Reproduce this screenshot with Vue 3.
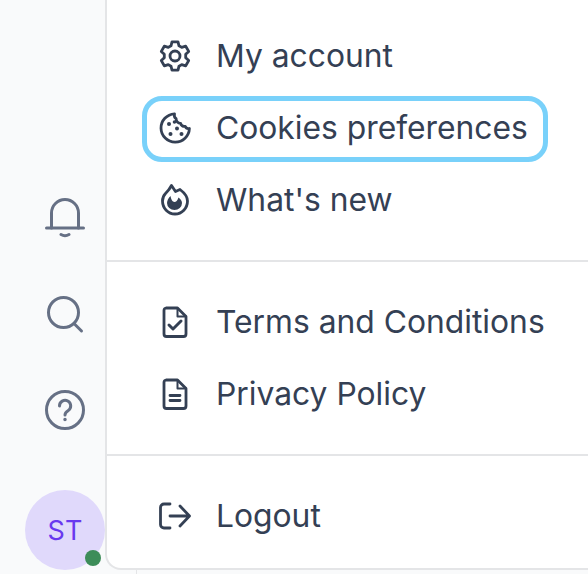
<template>
  <div class="page">
    <aside class="rail">
      <div class="rail-icons">
        <button class="rail-btn">
          <svg viewBox="0 0 40 40" width="40" height="40" fill="none" stroke="#667085" stroke-width="3" stroke-linecap="round" stroke-linejoin="round">
            <path d="M6.500 30V15a13.500 13.500 0 0 1 27 0v15" />
            <path d="M1.500 30h37" />
            <path d="M16 36.500c2.500 1.500 5.500 1.500 8 0" />
          </svg>
        </button>
        <button class="rail-btn">
          <svg viewBox="0 0 40 40" width="40" height="40" fill="none" stroke="#667085" stroke-width="3" stroke-linecap="round">
            <circle cx="18.500" cy="18.500" r="15" />
            <path d="M29.500 30l7 7" />
          </svg>
        </button>
        <button class="rail-btn">
          <svg viewBox="0 0 40 40" width="40" height="40" fill="none" stroke="#667085" stroke-width="3" stroke-linecap="round">
            <circle cx="20" cy="20" r="18.500" />
            <path d="M14.500 16a5.600 5.600 0 1 1 8.500 4.700c-2 1.300-3 2.300-3 4.300" />
            <circle cx="20" cy="29.500" r="1" fill="#667085" stroke-width="1.500" />
          </svg>
        </button>
      </div>
      <div class="avatar">
        ST
        <span class="status"></span>
      </div>
    </aside>

    <main class="menu">
      <section class="group">
        <a class="item" v-for="item in topItems" :key="item.label" :class="{ focused: item.focused }">
          <span class="icon" v-html="item.icon"></span>
          <span class="label">{{ item.label }}</span>
        </a>
      </section>
      <section class="group">
        <a class="item" v-for="item in legalItems" :key="item.label">
          <span class="icon" v-html="item.icon"></span>
          <span class="label">{{ item.label }}</span>
        </a>
      </section>
      <section class="group last">
        <a class="item">
          <span class="icon" v-html="logoutIcon"></span>
          <span class="label">Logout</span>
        </a>
      </section>
    </main>
    <span class="tick"></span>
  </div>
</template>

<script setup>
const svg = (body) =>
  `<svg viewBox="0 0 32 32" width="32" height="32" fill="none" stroke="#344054" stroke-width="2.800" stroke-linecap="round" stroke-linejoin="round">${body}</svg>`;

const docShape =
  '<path d="M7 2h11.500L27 10.500V28a2.500 2.500 0 0 1-2.500 2.500h-17A2.500 2.500 0 0 1 5 28V4.500A2.500 2.500 0 0 1 7 2z"/><path d="M18.500 2.500v8H27" stroke-width="2"/>';

const topItems = [
  {
    label: "My account",
    icon: svg(
      '<circle cx="16" cy="16" r="5"/><path d="M13 1.800h6l1 4 2.700 1.600 4-1.200 3 5.200-3 2.900v3.400l3 2.900-3 5.200-4-1.200L20 26.200l-1 4h-6l-1-4-2.700-1.600-4 1.200-3-5.200 3-2.900v-3.400l-3-2.900 3-5.200 4 1.200L12 5.800z"/>'
    ),
  },
  {
    label: "Cookies preferences",
    focused: true,
    icon: svg(
      '<path d="M15.500 1.800A14.200 14.200 0 1 0 30.400 16.500c-1.800.5-3.500-.4-4.200-2.200-2.200.5-4.300-.9-4.600-3-2.500.1-4.600-2-4.500-4.600-1.400-1-2-3.300-1.600-4.900z"/><g fill="#344054" stroke="none"><circle cx="10" cy="12" r="2"/><circle cx="15.500" cy="10" r="1.800"/><circle cx="11.500" cy="22" r="2"/><circle cx="18" cy="16.500" r="2"/><circle cx="22.500" cy="22" r="2"/></g>'
    ),
  },
  {
    label: "What's new",
    icon: svg(
      '<path d="M12.500 1.500l4 6 4.500-2c4 3 7.500 6.500 7.500 11.500a12.500 13 0 0 1-25 0c0-3 1-5.500 3-7.500 2.500-2.500 4.500-5 6-8z"/><path d="M11.500 12c.5 3 2 6 4 6 1.500 0 3-1.500 4-4.500 2 1.500 3.500 3.500 3.500 5.500a7.500 7 0 0 1-15 0c0-2.500 1.500-5 3.500-7z" fill="#344054" stroke="none"/>'
    ),
  },
];

const legalItems = [
  {
    label: "Terms and Conditions",
    icon: svg(docShape + '<path d="M10 19l4 4 8-8" stroke-width="3"/>'),
  },
  {
    label: "Privacy Policy",
    icon: svg(docShape + '<path d="M11 17.500h10M11 22.500h10"/>'),
  },
];

const logoutIcon = svg(
  '<path d="M11 4H5a3.500 3.500 0 0 0-3.500 3.500v17A3.500 3.500 0 0 0 5 28h6"/><path d="M11 16h19M21 6l9.500 10L21 26"/>'
);
</script>

<style>
html,
body {
  margin: 0;
  padding: 0;
  background: #fff;
}
</style>

<style scoped>
.page {
  width: 588px;
  height: 574px;
  display: flex;
  overflow: hidden;
  position: relative;
  font-family: Inter, "Liberation Sans", sans-serif;
  background: #f9fafb;
}

.rail {
  width: 105px;
  flex: none;
  display: flex;
  flex-direction: column;
  justify-content: space-between;
  padding: 198px 0 4px 25px;
  box-sizing: border-box;
}

.rail-icons {
  display: flex;
  flex-direction: column;
  gap: 56px;
  padding-left: 20px;
}

.rail-btn {
  width: 40px;
  height: 40px;
  padding: 0;
  border: 0;
  background: none;
}

.rail-btn svg {
  display: block;
}

.avatar {
  position: relative;
  width: 80px;
  height: 80px;
  border-radius: 50%;
  background: #e0d9fb;
  color: #6938ef;
  font-size: 27px;
  display: flex;
  align-items: center;
  justify-content: center;
}

.status {
  position: absolute;
  right: 4px;
  bottom: 4px;
  width: 16px;
  height: 16px;
  border-radius: 50%;
  background: #3d8d59;
}

.menu {
  flex: 1;
  height: 570px;
  box-sizing: border-box;
  background: #fff;
  border-left: 2px solid #e4e5e7;
  border-bottom: 2px solid #e4e5e7;
  border-bottom-left-radius: 16px;
}

.group {
  border-bottom: 2px solid #e4e5e7;
  padding: 30px 0 30px 36px;
  display: flex;
  flex-direction: column;
  gap: 12px;
}

.group:first-child {
  padding-top: 26px;
}

.group.last {
  border-bottom: 0;
}

.item {
  position: relative;
  display: flex;
  align-items: center;
  gap: 25px;
  height: 60px;
  width: fit-content;
  padding: 0 20px 0 16px;
  color: #344054;
  font-size: 31.800px;
  box-sizing: border-box;
}

.label {
  padding-bottom: 2px;
}

.item.focused::after {
  content: "";
  position: absolute;
  inset: -2px 0 -4px -1px;
  border: 5px solid #79d1fa;
  border-radius: 20px;
}

.icon {
  width: 32px;
  height: 32px;
  display: block;
}

.icon :deep(svg) {
  display: block;
}

.tick {
  position: absolute;
  left: 136px;
  top: 570px;
  width: 1px;
  height: 4px;
  background: #e4e5e7;
}
</style>
